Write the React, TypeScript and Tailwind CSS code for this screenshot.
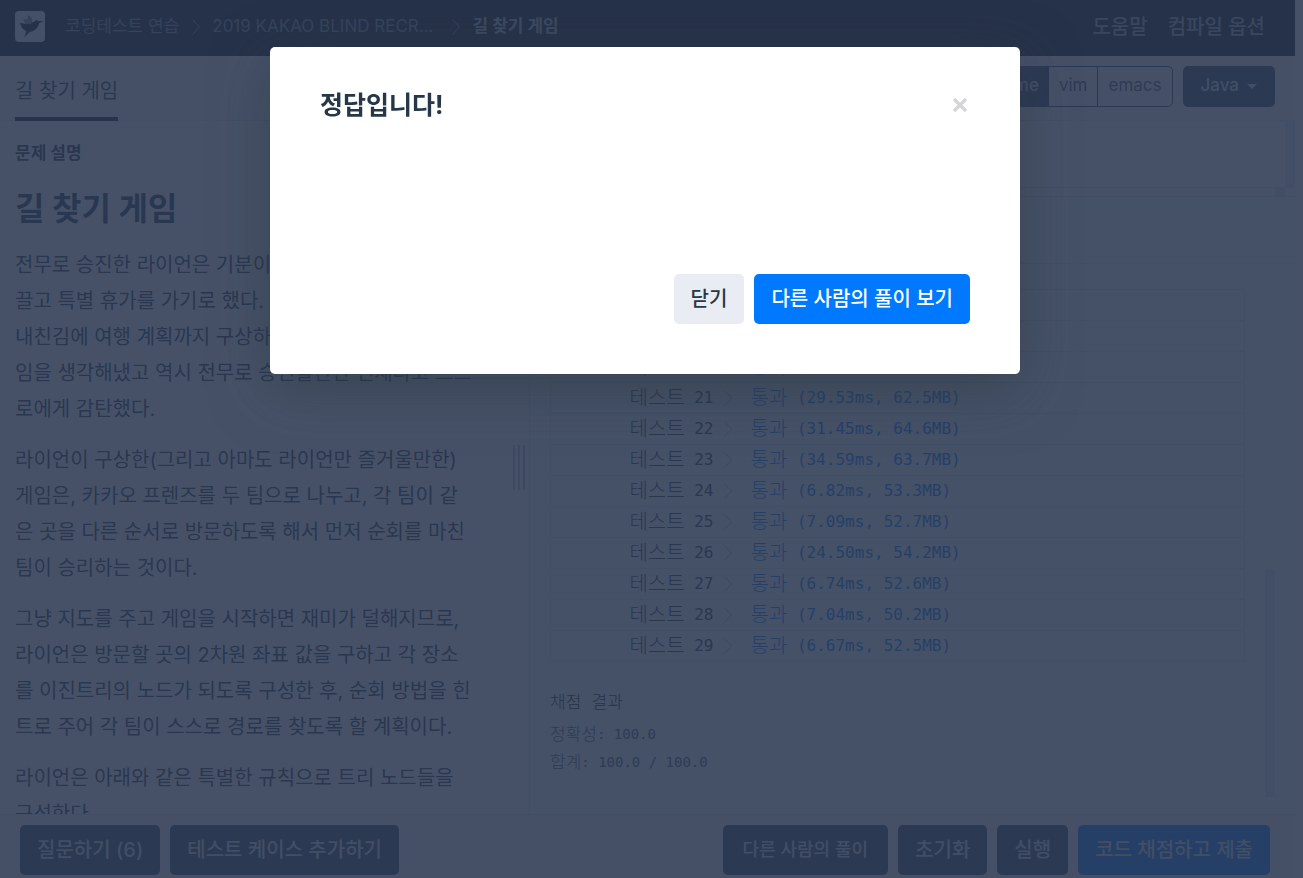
interface TestResult {
    id: number;
    time: string;
    memory: string;
}

const RESULTS: TestResult[] = [
    { id: 18, time: '22.61ms', memory: '62.1MB' },
    { id: 19, time: '25.18ms', memory: '61.9MB' },
    { id: 20, time: '28.02ms', memory: '63.2MB' },
    { id: 21, time: '29.53ms', memory: '62.5MB' },
    { id: 22, time: '31.45ms', memory: '64.6MB' },
    { id: 23, time: '34.59ms', memory: '63.7MB' },
    { id: 24, time: '6.82ms', memory: '53.3MB' },
    { id: 25, time: '7.09ms', memory: '52.7MB' },
    { id: 26, time: '24.50ms', memory: '54.2MB' },
    { id: 27, time: '6.74ms', memory: '52.6MB' },
    { id: 28, time: '7.04ms', memory: '50.2MB' },
    { id: 29, time: '6.67ms', memory: '52.5MB' },
];

const PARAGRAPHS = [
    [
        '전무로 승진한 라이언은 기분이 너무 좋아 프렌즈를 이',
        '끌고 특별 휴가를 가기로 했다.',
        '내친김에 여행 계획까지 구상하던 라이언은 재미있는 게',
        '임을 생각해냈고 역시 전무로 승진할만한 인재라고 스스',
        '로에게 감탄했다.',
    ],
    [
        '라이언이 구상한(그리고 아마도 라이언만 즐거울만한)',
        '게임은, 카카오 프렌즈를 두 팀으로 나누고, 각 팀이 같',
        '은 곳을 다른 순서로 방문하도록 해서 먼저 순회를 마친',
        '팀이 승리하는 것이다.',
    ],
    [
        '그냥 지도를 주고 게임을 시작하면 재미가 덜해지므로,',
        '라이언은 방문할 곳의 2차원 좌표 값을 구하고 각 장소',
        '를 이진트리의 노드가 되도록 구성한 후, 순회 방법을 힌',
        '트로 주어 각 팀이 스스로 경로를 찾도록 할 계획이다.',
    ],
    ['라이언은 아래와 같은 특별한 규칙으로 트리 노드들을', '구성한다.'],
];

const button = 'h-[50px] shrink-0 rounded-[5px] px-[17px] text-xl font-medium';
const darkButton = `${button} bg-[#364567] text-[#d7e2eb]`;

function Logo() {
    return (
        <svg viewBox="0 0 30 31" className="h-[31px] w-[30px] shrink-0" aria-hidden="true">
            <rect width="30" height="31" rx="4" fill="#f0f4fa" />
            <path
                d="M5 11.5 11 13.3 8.2 7.8 12 9.2 13.7 4.2 17.2 8.5 16.5 11.8 19.5 10.6C20.2 9.3 22 8.7 23.5 10L29 10.5 24.3 11.9C22.5 17.8 19.2 20 15.2 20.7L9.2 26.2 11.4 20.3C7.8 18.7 5.7 15.8 5 11.5Z"
                fill="#0c151c"
            />
            <path d="M8.2 7.8 12 9.2 13.7 4.2 17.2 8.5 16 13 11 13.3Z" fill="#78909c" />
        </svg>
    );
}

function Chevron({ className }: { className: string }) {
    return (
        <svg viewBox="0 0 8 16" className={`h-4 w-2 ${className}`} fill="none" stroke="currentColor" aria-hidden="true">
            <path d="M.5.5 7.5 8 .5 15.5" />
        </svg>
    );
}

function Header() {
    return (
        <header className="flex h-14 shrink-0 items-center justify-between bg-[#0c151c] pr-[30px] pl-[15px]">
            <nav className="flex items-center pb-[3px] text-[17px] text-[#78909c]" aria-label="breadcrumb">
                <a href="#home" aria-label="홈">
                    <Logo />
                </a>
                <a href="#practice" className="ml-5 whitespace-nowrap">코딩테스트 연습</a>
                <Chevron className="mr-3 ml-[13px]" />
                <a href="#kakao" className="mr-2 whitespace-nowrap">2019 KAKAO BLIND RECR...</a>
                <Chevron className="mr-3 ml-[11px]" />
                <a href="#lesson" className="font-bold whitespace-nowrap text-[#b2c0cc]">길 찾기 게임</a>
            </nav>
            <nav className="flex gap-5 pb-0.5 text-xl font-medium text-[#98a8b9]">
                <a href="#help">도움말</a>
                <a href="#options">컴파일 옵션</a>
            </nav>
        </header>
    );
}

function Toolbar() {
    return (
        <div className="flex h-[65px] shrink-0 items-stretch justify-between border-b border-[#d7e2eb] bg-[#f7f7fb] pr-5 pl-[15px]">
            <a href="#problem" className="-mb-px flex items-center border-b-4 border-[#0c1c38] pt-2 text-xl text-[#263747]">
                길 찾기 게임
            </a>
            <div className="flex items-center gap-2.5 pb-1 text-[17px]">
                <div className="flex h-[41px] overflow-hidden rounded-[5px] border border-[#364567] text-[#44576c]">
                    <button className="bg-[#364567] px-2.5 font-medium text-[#d7e2eb]">sublime</button>
                    <button className="px-2.5">vim</button>
                    <button className="border-l border-[#364567] px-2.5">emacs</button>
                </div>
                <button className="flex h-[41px] items-center gap-2 rounded-[5px] bg-[#364567] px-[18px] font-medium text-[#d7e2eb]">
                    Java
                    <span className="border-x-[5px] border-t-[5px] border-x-transparent border-t-[#d7e2eb]" />
                </button>
            </div>
        </div>
    );
}

function Description() {
    return (
        <section className="min-w-0 flex-1 overflow-hidden pt-[18px] pl-[15px] text-[#263747]">
            <h2 className="text-[17px] leading-7 font-bold">문제 설명</h2>
            <h1 className="mt-4 text-[32px] leading-[52px] font-bold text-[#263757]">길 찾기 게임</h1>
            <div className="mt-3 flex flex-col gap-[15px] text-xl leading-9">
                {PARAGRAPHS.map((lines) => (
                    <p key={lines[0]}>
                        {lines.map((line) => (
                            <span key={line} className="block whitespace-nowrap">{line}</span>
                        ))}
                    </p>
                ))}
            </div>
        </section>
    );
}

function Splitter() {
    return (
        <div className="flex w-[17px] shrink-0 items-center border-r border-[#d7e2eb]">
            <div className="flex gap-[3px]">
                <span className="h-[45px] w-0.5 bg-[#b2c0cc]" />
                <span className="h-[45px] w-0.5 bg-[#b2c0cc]" />
                <span className="h-[45px] w-0.5 bg-[#b2c0cc]" />
            </div>
        </div>
    );
}

function ResultRow({ result }: { result: TestResult }) {
    return (
        <tr className="h-[31px] border border-[#d7e2eb]">
            <th scope="row" className="w-[163px] p-0 text-right font-light whitespace-nowrap text-[#263747]">
                <span className="align-[-2px] text-xl leading-6">테스트</span> {result.id}
            </th>
            <td className="w-[37px] p-0">
                <Chevron className="ml-2.5 text-[#b2c0cc]" />
            </td>
            <td className="p-0 font-light whitespace-nowrap text-[#0078ff]">
                <span className="align-[-2px] text-xl leading-6">통과</span> ({result.time}, {result.memory})
            </td>
        </tr>
    );
}

function Output() {
    return (
        <section className="flex min-h-0 flex-1 border-t border-[#d7e2eb] bg-[#f7f9fb] pt-5 pr-5 pb-[17px] pl-5">
            <div className="flex min-h-0 flex-1 flex-col justify-end overflow-hidden pr-5 font-['DejaVu_Sans_Mono','Noto_Sans_CJK_KR',monospace]">
                <table className="w-full shrink-0 border-collapse text-base leading-6">
                    <tbody>
                        {RESULTS.map((result) => (
                            <ResultRow key={result.id} result={result} />
                        ))}
                    </tbody>
                </table>
                <div className="shrink-0 pt-[26px] pb-[21px] text-sm font-light text-[#44576c]">
                    <h3 className="mb-1 text-[17px] leading-7 text-[#0c151c]">채점 결과</h3>
                    <p className="leading-7">
                        <span className="align-[-1px] text-[17px] leading-6">정확성</span>: 100.0
                    </p>
                    <p className="leading-7">
                        <span className="align-[-1px] text-[17px] leading-6">합계</span>: 100.0 / 100.0
                    </p>
                </div>
            </div>
            <div className="flex w-2.5 items-end">
                <span className="h-[227px] w-2.5 bg-[#d7e2eb]" />
            </div>
        </section>
    );
}

function RightPane() {
    return (
        <div className="flex w-[765px] shrink-0 flex-col">
            <div className="flex h-[66px] shrink-0 justify-end">
                <span className="w-2.5 bg-[#dce4ec]" />
            </div>
            <div className="flex h-2.5 shrink-0 justify-end border-y border-[#d7e2eb] pr-2.5">
                <span className="w-2.5 bg-[#dce4ec]" />
            </div>
            <div className="h-[66px] shrink-0 bg-[#f7f9fb]" />
            <Output />
        </div>
    );
}

function Footer() {
    return (
        <footer className="flex h-16 shrink-0 items-start justify-between border-t border-[#d7e2eb] bg-[#f7f7fb] pt-2.5 pr-[25px] pl-5">
            <div className="flex gap-2.5">
                <button className={darkButton}>질문하기 (6)</button>
                <button className={darkButton}>테스트 케이스 추가하기</button>
            </div>
            <div className="flex gap-2.5">
                <button className="h-[50px] shrink-0 rounded-[5px] bg-[#364567] px-5 text-lg font-medium text-[#d7e2eb]">
                    다른 사람의 풀이
                </button>
                <button className={darkButton}>초기화</button>
                <button className={darkButton}>실행</button>
                <button className={`${button} bg-[#0078ff] text-[#d7e2eb]`}>코드 채점하고 제출</button>
            </div>
        </footer>
    );
}

function ResultModal() {
    return (
        <div className="fixed inset-0 bg-[rgba(42,55,80,0.87)] pt-[47px] pr-[13px]">
            <div
                role="dialog"
                aria-modal="true"
                aria-labelledby="modal-title"
                className="mx-auto flex max-w-[750px] flex-col rounded-[5px] bg-white p-[50px] pt-10 shadow-[0_16px_56px_rgba(44,55,65,0.5)]"
            >
                <div className="flex items-center justify-between">
                    <h4 id="modal-title" className="text-[25px] leading-9 font-bold text-[#263747]">정답입니다!</h4>
                    <button aria-label="닫기" className="px-0.5 text-[#d4d5d8]">
                        <svg viewBox="0 0 16 16" className="size-4" stroke="currentColor" strokeWidth="3.2">
                            <path d="M2 2 14 14M14 2 2 14" />
                        </svg>
                    </button>
                </div>
                <div className="h-[151px]" />
                <div className="flex justify-end gap-2.5">
                    <button className={`${button} bg-[#e9ecf3] text-[#263747]`}>닫기</button>
                    <button className={`${button} bg-[#0078ff] text-white`}>다른 사람의 풀이 보기</button>
                </div>
            </div>
        </div>
    );
}

export default function App() {
    return (
        <div className="h-screen overflow-hidden bg-white pr-2 font-['Inter','Noto_Sans_CJK_KR',sans-serif]">
            <div className="flex h-full flex-col">
                <Header />
                <Toolbar />
                <main className="flex min-h-0 flex-1">
                    <Description />
                    <Splitter />
                    <RightPane />
                </main>
                <Footer />
            </div>
            <ResultModal />
        </div>
    );
}
